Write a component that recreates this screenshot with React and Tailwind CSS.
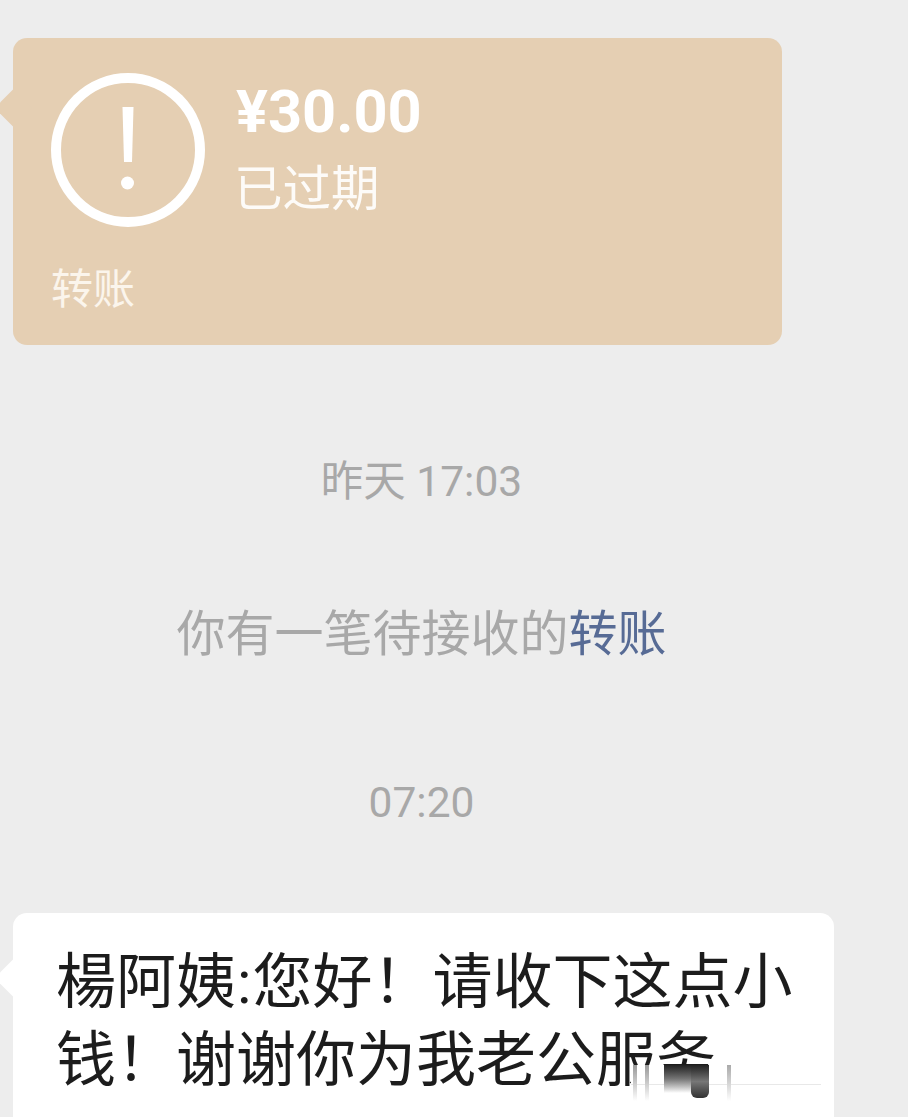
const cjk = { fontFamily: 'Roboto, "Noto Sans CJK SC", "Noto Sans", sans-serif' };

function AlertIcon() {
  return (
    <svg width="154" height="154" viewBox="0 0 154 154" className="shrink-0">
      <circle cx="77" cy="77" r="72" fill="none" stroke="#ffffff" strokeWidth="10" />
      <path d="M71.5 34h11l-1.5 55h-8z" fill="#ffffff" />
      <circle cx="76.5" cy="110" r="6.5" fill="#ffffff" />
    </svg>
  );
}

function TransferCard() {
  return (
    <div className="relative w-[769px] h-[307px] bg-[#e5cfb3] rounded-[14px] pl-[38px] pt-[35px]">
      {/* bubble tail */}
      <div className="absolute left-[-13px] top-[57px] w-[26px] h-[26px] rotate-45 bg-[#e5cfb3]" />
      <div className="relative flex gap-[31px]">
        <AlertIcon />
        <div className="flex flex-col mt-[1px]">
          <div className="text-[59.5px] leading-[76px] font-bold text-white">¥30.00</div>
          <div className="text-[48.5px] leading-[76px] text-[#fdfbf8] -ml-[2px] mt-[2px]">已过期</div>
        </div>
      </div>
      <div className="relative mt-[31px] text-[42px] leading-[62px] text-[#fbf5ec]">转账</div>
    </div>
  );
}

// the smeared mark lying over the end of the second line
function Smear() {
  return (
    <div className="absolute left-[618px] top-[152px] w-[190px] h-[50px] bg-white flex items-start pl-[2px]">
      <div className="absolute left-0 right-0 top-[19px] h-[1px] bg-[#e8e8e8]" />
      <div className="relative w-[4px] h-[36px] bg-gradient-to-b from-[#999999] to-white" />
      <div className="relative ml-[8px] w-[4px] h-[36px] bg-gradient-to-b from-[#999999] to-white" />
      <div className="relative ml-[15px] w-[27px] h-[28px] bg-gradient-to-b from-[#222222] via-[#777777] to-white" />
      <div className="relative w-[18px] h-[33px] rounded-b-[6px] bg-gradient-to-b from-[#222222] via-[#777777] to-[#333333]" />
      <div className="relative ml-[18px] w-[4px] h-[36px] bg-gradient-to-b from-[#aaaaaa] to-white" />
    </div>
  );
}

export default function App() {
  return (
    <div className="w-[908px] h-[1117px] overflow-hidden bg-[#ededed] pl-[13px] pt-[38px]" style={cjk}>
      <TransferCard />

      <div className="w-[817px] mt-[107px] text-center text-[42.5px] leading-[60px] text-[#a8a8a8]">昨天 17:03</div>

      <div className="w-[817px] mt-[93px] text-center text-[49px] leading-[60px] text-[#a8a8a8]">
        你有一笔待接收的<span className="text-[#576b95]">转账</span>
      </div>

      <div className="w-[817px] mt-[108px] text-center text-[42.5px] leading-[60px] text-[#a8a8a8]">07:20</div>

      <div className="relative mt-[80px] w-[821px] h-[260px] bg-white rounded-[14px] pl-[43px] pt-[31px]">
        {/* bubble tail */}
        <div className="absolute left-[-13px] top-[52px] w-[26px] h-[26px] rotate-45 bg-white" />
        <div className="relative w-[750px] text-[60px] leading-[78px] text-[#1c1c1c]">
          <div className="whitespace-nowrap">楊阿姨<span className="mx-[1px]">:</span>您好！请收下这点小</div>
          <div className="whitespace-nowrap">钱！谢谢你为我老公服务</div>
        </div>
        <Smear />
      </div>
    </div>
  );
}
